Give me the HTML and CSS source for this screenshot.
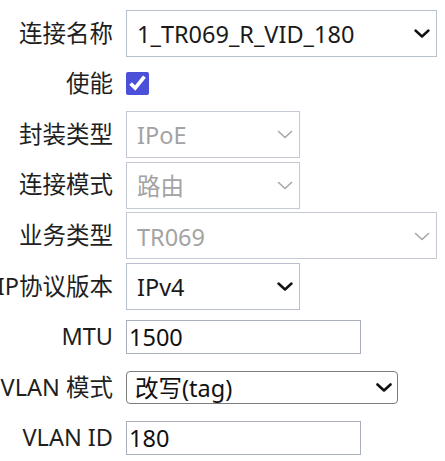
FILE: index.html
```html
<!DOCTYPE html>
<html lang="zh-CN">
<head>
<meta charset="utf-8">
<title>WAN 配置</title>
<link rel="stylesheet" href="styles.css">
</head>
<body>
<form class="form">
  <label class="lbl">连接名称</label>
  <div class="ctl">
    <div class="sel sel-long">
      <select><option>1_TR069_R_VID_180</option></select>
      <svg class="chev" viewBox="0 0 16 9" width="16" height="9"><path d="M1.5 1.5 L8 7.5 L14.5 1.5" fill="none" stroke="#111" stroke-width="2.4" stroke-linecap="round" stroke-linejoin="round"/></svg>
    </div>
  </div>

  <label class="lbl">使能</label>
  <div class="ctl"><input class="chk" type="checkbox" checked></div>

  <label class="lbl">封装类型</label>
  <div class="ctl">
    <div class="sel sel-short dis">
      <select disabled><option>IPoE</option></select>
      <svg class="chev" viewBox="0 0 16 9" width="16" height="9"><path d="M1.5 1.5 L8 7.5 L14.5 1.5" fill="none" stroke="#a6a6a6" stroke-width="1.6" stroke-linecap="round" stroke-linejoin="round"/></svg>
    </div>
  </div>

  <label class="lbl">连接模式</label>
  <div class="ctl">
    <div class="sel sel-short dis">
      <select disabled><option>路由</option></select>
      <svg class="chev" viewBox="0 0 16 9" width="16" height="9"><path d="M1.5 1.5 L8 7.5 L14.5 1.5" fill="none" stroke="#a6a6a6" stroke-width="1.6" stroke-linecap="round" stroke-linejoin="round"/></svg>
    </div>
  </div>

  <label class="lbl">业务类型</label>
  <div class="ctl">
    <div class="sel sel-long dis">
      <select disabled><option>TR069</option></select>
      <svg class="chev" viewBox="0 0 16 9" width="16" height="9"><path d="M1.5 1.5 L8 7.5 L14.5 1.5" fill="none" stroke="#a6a6a6" stroke-width="1.6" stroke-linecap="round" stroke-linejoin="round"/></svg>
    </div>
  </div>

  <label class="lbl">IP协议版本</label>
  <div class="ctl">
    <div class="sel sel-short">
      <select><option>IPv4</option></select>
      <svg class="chev" viewBox="0 0 16 9" width="16" height="9"><path d="M1.5 1.5 L8 7.5 L14.5 1.5" fill="none" stroke="#111" stroke-width="2.4" stroke-linecap="round" stroke-linejoin="round"/></svg>
    </div>
  </div>

  <label class="lbl">MTU</label>
  <div class="ctl"><input class="txt" type="text" value="1500"></div>

  <label class="lbl">VLAN 模式</label>
  <div class="ctl">
    <div class="sel sel-native">
      <select><option>改写(tag)</option></select>
      <svg class="chev" viewBox="0 0 16 9" width="16" height="9"><path d="M1.5 1.5 L8 7.5 L14.5 1.5" fill="none" stroke="#111" stroke-width="2.6" stroke-linecap="round" stroke-linejoin="round"/></svg>
    </div>
  </div>

  <label class="lbl">VLAN ID</label>
  <div class="ctl"><input class="txt" type="text" value="180"></div>
</form>
</body>
</html>
```

FILE: styles.css
```css
html, body {
  margin: 0;
  padding: 0;
  background: #ffffff;
}

body {
  font-family: "Noto Sans", "Noto Sans CJK SC", sans-serif;
  font-size: 23.5px;
  color: #1f1f1f;
  overflow: hidden;
}

.form {
  display: grid;
  grid-template-columns: 113px 1fr;
  grid-auto-rows: 50.6px;
  column-gap: 13px;
  padding-top: 8px;
}

.lbl {
  display: flex;
  justify-content: flex-end;
  align-items: center;
  white-space: nowrap;
  min-width: 0;
  line-height: 1;
  color: #1f1f1f;
}

.ctl {
  display: flex;
  align-items: center;
  min-width: 0;
}

.sel {
  position: relative;
  display: flex;
  box-sizing: border-box;
  height: 47px;
}

.sel select {
  appearance: none;
  -webkit-appearance: none;
  width: 100%;
  height: 100%;
  box-sizing: border-box;
  margin: 0;
  border: 1.5px solid #b7c0cc;
  border-radius: 0;
  background: #ffffff;
  font: inherit;
  color: #1a1a1a;
  padding: 2px 36px 0 10px;
  outline: none;
}

.sel-long { width: 311px; }
.sel-short { width: 174px; }

.dis select {
  color: #a3a3a3;
  opacity: 1;
  border-color: #c3cad3;
}

.chev {
  position: absolute;
  right: 7px;
  top: 50%;
  margin-top: -4px;
  pointer-events: none;
}

.sel-native {
  width: 272px;
  height: 33px;
}

.sel-native select {
  border: 1.5px solid #7d7d7d;
  border-radius: 4px;
  padding: 0 36px 0 8px;
  color: #111;
}

.sel-native .chev {
  right: 6px;
}

.chk {
  width: 23px;
  height: 23px;
  margin: 0;
  accent-color: #4b50d8;
}

.txt {
  box-sizing: border-box;
  width: 235px;
  height: 34px;
  margin: 0;
  border: 1.5px solid #a9b0bb;
  border-radius: 0;
  padding: 0 2px;
  font: inherit;
  color: #111;
  outline: none;
  background: #ffffff;
}
```
